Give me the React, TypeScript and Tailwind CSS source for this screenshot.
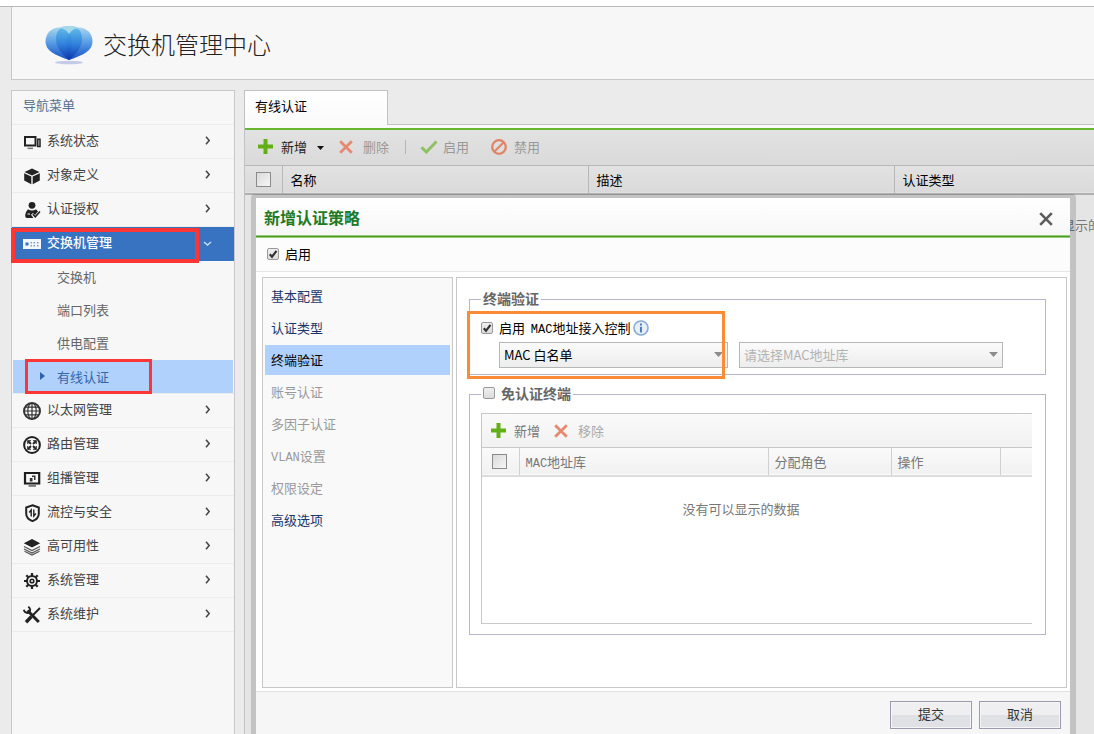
import { useState } from "react";
import type { ReactNode } from "react";

const menuItems = [
  { id: "status", label: "系统状态" },
  { id: "object", label: "对象定义" },
  { id: "auth", label: "认证授权" },
  { id: "switch", label: "交换机管理", children: ["交换机", "端口列表", "供电配置", "有线认证"] },
  { id: "ethernet", label: "以太网管理" },
  { id: "route", label: "路由管理" },
  { id: "multicast", label: "组播管理" },
  { id: "security", label: "流控与安全" },
  { id: "ha", label: "高可用性" },
  { id: "system", label: "系统管理" },
  { id: "maintain", label: "系统维护" },
];

const steps = [
  { label: "基本配置" },
  { label: "认证类型" },
  { label: "终端验证" },
  { label: "账号认证", disabled: true },
  { label: "多因子认证", disabled: true },
  { label: "设置", prefix: "VLAN", disabled: true },
  { label: "权限设定", disabled: true },
  { label: "高级选项" },
];

// 18x18 drawings for the navigation rows
const menuIcons: Record<string, ReactNode> = {
  status: (
    <g>
      <path d="M2 4h10.500v8.500H2z" fill="none" stroke="#222" strokeWidth="2" />
      <path d="M4.500 14.600h5.500v1.500H4.500z" fill="#777" />
      <path d="M14.800 6.300h2.200v7.200h-2.200z" fill="none" stroke="#222" strokeWidth="1.500" />
    </g>
  ),
  object: (
    <g fill="#222">
      <path d="M9 1.500 16.500 5 9 8.500 1.500 5z" />
      <path d="M1.200 6.200 8.300 9.600v7.600L1.200 13.600z" />
      <path d="M16.800 6.200 9.700 9.600v7.600l7.100-3.600z" />
    </g>
  ),
  auth: (
    <g fill="#222">
      <circle cx="9" cy="4.300" r="3.400" />
      <path d="M5 8.200c2.500 1.600 5.500 1.600 8 0l2 2.300-3 3.500-2-2-2 1.700 2.500 3.300H4c-2.500 0-2.500-5 1-8.800z" />
      <path d="m9.800 13.300 2.500 2.500 4.700-5.200" fill="none" stroke="#222" strokeWidth="1.500" />
      <path d="M4.500 13h2.500" stroke="#f7f7f7" />
    </g>
  ),
  switch: (
    <g>
      <path d="M0 4h18v10H0z" fill="#f4f6fa" />
      <path d="M2.500 7.500h3v3h-3z" fill="#3773c0" />
      <path d="M7.500 7h1.500v1.500H7.500zM10.500 7H12v1.500h-1.500zM14 7h1.500v1.500H14zM7.500 10H9v1.500H7.500zM10.500 10H12v1.500h-1.500zM14 10h1.500v1.500H14z" fill="#7b9fd0" />
    </g>
  ),
  ethernet: (
    <g fill="none" stroke="#333" strokeWidth="1.200">
      <circle cx="9" cy="9" r="8" strokeWidth="2" />
      <ellipse cx="9" cy="9" rx="4.200" ry="8" />
      <path d="M9 1v16M1 9h16M2.200 5.200h13.600M2.200 12.800h13.600" />
    </g>
  ),
  route: (
    <g fill="none" stroke="#222">
      <circle cx="9" cy="9" r="7.900" strokeWidth="2" />
      <path d="M5 5l3 3M13 5l-3 3M5 13l3-3M13 13l-3-3" strokeWidth="1.800" />
      <path d="M4.800 8V4.800H8M13.200 8V4.800H10M4.800 10v3.200H8M13.200 10v3.200H10" strokeWidth="1.100" />
    </g>
  ),
  multicast: (
    <g>
      <path d="M2 3h14.200v10.500H2z" fill="none" stroke="#1d1d1d" strokeWidth="2.200" />
      <path d="M5.500 15h7.500v1.800H5.500z" fill="#777" />
      <path d="M6.800 8h2.700v3.500H6.800zM9 5.500h3.500V10H11V7H9z" fill="#333" />
    </g>
  ),
  security: (
    <g fill="none" stroke="#222">
      <path d="M9.500 1.200 15.800 3.500v6.200c0 3.500-2.800 6-6.300 7.400-3.500-1.400-6.300-3.900-6.300-7.400V3.500z" strokeWidth="2" />
      <path d="M8.200 12.500V6L6.200 8.500M10.800 5.500V12l2-2.500" strokeWidth="1.400" />
    </g>
  ),
  ha: (
    <g>
      <path d="M9 1 17.200 5.300 9 9.600.800 5.300z" fill="#222" />
      <path d="M1 8.500 9 12.500l8-4M1 11l8 4 8-4M1.500 13.300 9 17l7.500-3.700" fill="none" stroke="#555" strokeWidth="1.200" />
    </g>
  ),
  system: (
    <g fill="none" stroke="#222">
      <circle cx="9" cy="9" r="5" strokeWidth="2" />
      <circle cx="9" cy="9" r="1.800" strokeWidth="1.600" />
      <path d="M9 1v3M9 14v3M1 9h3M14 9h3M3.300 3.300l2 2M12.700 12.700l2 2M3.300 14.700l2-2M12.700 5.300l2-2" strokeWidth="2.200" />
    </g>
  ),
  maintain: (
    <g fill="none" stroke="#222">
      <path d="M4.500 4.500 15.800 16" strokeWidth="3" />
      <path d="M.800 3.800c.700 3 3.700 4 5.700 2.200 1.200-1.800.700-4-1.300-5.200" strokeWidth="1.900" />
      <path d="M17 2 9.500 9.500" strokeWidth="2" />
      <path d="M8.500 10.500 3 16.200" strokeWidth="3.400" />
    </g>
  ),
};

function Logo() {
  return (
    <svg width="48" height="40" viewBox="0 0 48 40" className="mt-0.5" aria-hidden="true">
      <defs>
        <linearGradient id="petal" x1="0" y1="0" x2="0" y2="1">
          <stop offset="0" stopColor="#a9d6ee" />
          <stop offset="0.450" stopColor="#5a9fe6" />
          <stop offset="1" stopColor="#1650c4" />
        </linearGradient>
        <linearGradient id="core" x1="0" y1="0" x2="0" y2="1">
          <stop offset="0" stopColor="#4fb4e4" />
          <stop offset="0.500" stopColor="#2a7ddb" />
          <stop offset="1" stopColor="#0b2fa6" />
        </linearGradient>
      </defs>
      <ellipse cx="24" cy="37.500" rx="14" ry="1.800" fill="#c3cbe6" />
      <path d="M24 1c7 0 12 2 13 6L24 35 11 7c1-4 6-6 13-6z" fill="#9fd3e8" />
      <path d="M24 35C10 30 .500 26 .500 16.500.500 8 7 2.500 14 2.500c6 0 10 5 10 12z" fill="url(#petal)" />
      <path d="M24 35c14-5 23.500-9 23.500-18.500C47.500 8 41 2.500 34 2.500c-6 0-10 5-10 12z" fill="url(#petal)" />
      <path d="M24 35C16 28 11 22 11 14 11 7 14 3 18 3c6 2 9 8 9 16 0 6-1 11-3 16z" fill="url(#core)" opacity="0.800" />
      <path d="M24 35c8-7 13-13 13-21 0-7-3-11-7-11-6 2-9 8-9 16 0 6 1 11 3 16z" fill="url(#core)" opacity="0.800" />
      <path d="M15 3c2-1.500 5-2 9-2s7 .500 9 2c-4 .500-7 2.500-9 6-2-3.500-5-5.500-9-6z" fill="#a5d8ea" />
    </svg>
  );
}

function PlusIcon() {
  return (
    <svg width="15" height="15" viewBox="0 0 15 15" aria-hidden="true">
      <path d="M5.500 0h4v5.500H15v4H9.500V15h-4V9.500H0v-4h5.500z" fill="#62b016" />
    </svg>
  );
}

function CrossIcon() {
  return (
    <svg width="14" height="14" viewBox="0 0 14 14" aria-hidden="true">
      <path d="m1.200 1.200 11.600 11.600M12.800 1.200 1.200 12.800" stroke="#e58a70" strokeWidth="2.800" />
    </svg>
  );
}

function Tick({ checked = false }: { checked?: boolean }) {
  const [on, setOn] = useState(checked);
  return (
    <span className="grid h-3 w-3 shrink-0">
      <input
        type="checkbox"
        checked={on}
        onChange={() => setOn(!on)}
        className="col-start-1 row-start-1 h-3 w-3 appearance-none rounded-[2px] border border-[#999] bg-linear-to-b from-[#efefef] to-[#dcdcdc]"
      />
      {on && (
        <svg viewBox="0 0 12 12" className="pointer-events-none col-start-1 row-start-1 h-3 w-3">
          <path d="m2.800 6.200 2.200 2.600 4.500-6" fill="none" stroke="#333" strokeWidth="2.200" />
        </svg>
      )}
    </span>
  );
}

function SelectAll() {
  return (
    <input
      type="checkbox"
      aria-label="全选"
      className="block h-[15px] w-[15px] appearance-none border border-[#8b8b8b] bg-linear-to-br from-[#dadada] to-[#f6f6f6]"
    />
  );
}

function Combo({ label, value, className }: { label: string; value: string; className: string }) {
  return (
    <span className={`grid items-center ${className}`}>
      <select
        aria-label={label}
        className="col-start-1 row-start-1 h-[26px] w-full appearance-none border border-[#b5b8b8] bg-linear-to-b from-[#fbfbfb] to-[#ededed] pl-1 text-[13px]"
      >
        <option>{value}</option>
      </select>
      <svg width="9" height="5" viewBox="0 0 9 5" className="pointer-events-none col-start-1 row-start-1 mr-[5px] mb-0.5 justify-self-end">
        <path d="M0 0h9L4.500 5z" fill="#8c8c8c" />
      </svg>
    </span>
  );
}

// Half-width latin letters next to the chinese text
function Narrow({ children }: { children: ReactNode }) {
  return <span className="font-['Liberation_Mono',monospace] text-xs">{children}</span>;
}

function Sidebar() {
  return (
    <nav className="w-56 shrink-0 border border-b-0 border-[#c8c8c8] bg-[#f7f7f7] text-[#444]">
      <h2 className="h-[34px] border-b border-[#ececec] pl-[11px] leading-7 text-[#56708f]">导航菜单</h2>
      <ul>
        {menuItems.map((item) => (
          <li key={item.id}>
            <button
              className={
                item.children
                  ? "relative flex h-[34px] w-full items-center bg-[#3773c0] pr-5 pl-[11px] text-white"
                  : "relative flex h-[34px] w-full items-center border-b border-[#ececec] pr-5 pl-[11px]"
              }
            >
              <svg width="18" height="18" viewBox="0 0 18 18" aria-hidden="true">
                {menuIcons[item.id]}
              </svg>
              <span className={item.children ? "ml-1.5 pb-1 font-medium" : "ml-1.5 pb-1"}>{item.label}</span>
              <svg width="9" height="9" viewBox="0 0 9 9" className="mr-0.5 mb-0.5 ml-auto" aria-hidden="true">
                <path
                  d={item.children ? "m1 3 3.500 3L8 3" : "m3 .800 3.200 3.700L3 8.200"}
                  fill="none"
                  stroke={item.children ? "#c8dcf5" : "#444"}
                  strokeWidth="1.500"
                />
              </svg>
              {item.children && (
                <span className="absolute top-px -left-px z-10 h-[35px] w-[188px] border-4 border-[#fc3535]" />
              )}
            </button>
            {item.children && (
              <ul className="border-b border-[#ececec] px-px text-[#666]">
                {item.children.map((child, i) => (
                  <li key={child} className="relative">
                    <a
                      href="#"
                      className={
                        i === 3
                          ? "flex h-[33px] items-center bg-[#b0d1fb] pl-[27px] text-[#3565a8]"
                          : "flex h-[33px] items-center pb-0.5 pl-11"
                      }
                    >
                      {i === 3 && (
                        <svg width="5" height="8" viewBox="0 0 5 8" className="mr-3 mb-px" aria-hidden="true">
                          <path d="M0 0v8l5-4z" fill="#2f62ad" />
                        </svg>
                      )}
                      {child}
                    </a>
                    {i === 3 && (
                      <span className="pointer-events-none absolute -top-px left-3 h-[35px] w-[127px] border-3 border-[#fc3535]" />
                    )}
                  </li>
                ))}
              </ul>
            )}
          </li>
        ))}
      </ul>
    </nav>
  );
}

function PolicyDialog() {
  const [active, setActive] = useState(2);

  return (
    <div
      role="dialog"
      aria-labelledby="dialog-title"
      className="absolute top-[104px] right-[18px] bottom-0 left-1.5 flex flex-col rounded-t-sm border-t-4 border-r-6 border-l-5 border-black/15 bg-white bg-clip-padding"
    >
      <div className="flex h-[37px] shrink-0 items-center justify-between bg-linear-to-b from-white to-[#f7f7f7] pr-[17px] pl-2">
        <h2 id="dialog-title" className="text-base font-bold text-[#1f7a24]">新增认证策略</h2>
        <button aria-label="关闭" className="mt-1">
          <svg width="14" height="14" viewBox="0 0 14 14">
            <path d="m1.200 1.200 11.600 11.600M12.800 1.200 1.200 12.800" stroke="#5c5c5c" strokeWidth="2.600" />
          </svg>
        </button>
      </div>
      <div className="h-[3px] shrink-0 border-y border-[#94c977] bg-[#4f9c22]" />
      <div className="flex h-[34px] shrink-0 items-center border-b border-[#e6e6e6] bg-[#fcfcfc] pb-0.5 pl-[11px]">
        <label className="flex items-center gap-1.5">
          <Tick checked />
          启用
        </label>
      </div>

      <div className="flex min-h-0 flex-1 gap-[3px] pt-[5px] pr-[3px] pb-[3px] pl-1.5">
        <ul className="flex w-[191px] shrink-0 flex-col gap-0.5 border border-[#c8c8c8] bg-[#f9f9f9] px-0.5 pt-[3px]">
          {steps.map((step, i) => (
            <li key={step.label}>
              <button
                disabled={step.disabled}
                onClick={() => setActive(i)}
                className={`h-[30px] w-full pl-1.5 text-left ${
                  step.disabled ? "text-[#999]" : active === i ? "bg-[#b0d1fb] text-black" : "text-[#1b3668]"
                }`}
              >
                {step.prefix && <Narrow>{step.prefix}</Narrow>}
                {step.label}
              </button>
            </li>
          ))}
        </ul>

        <div className="min-w-0 flex-1 border border-[#c8c8c8] pt-3 pr-5 pl-3">
          <fieldset className="border border-[#b5b5cb] px-[11px] pb-1.5">
            <legend className="h-[18px] px-0.5 text-sm leading-[18px] font-bold text-[#666]">
              <span className="block leading-4">终端验证</span>
            </legend>
            <div className="relative pt-2.5">
              <div className="flex h-5 items-center">
                <label className="flex items-center gap-1.5">
                  <Tick checked />
                  <span>
                    启用&nbsp; <Narrow>MAC</Narrow>地址接入控制
                  </span>
                </label>
                <svg width="16" height="16" viewBox="0 0 16 16" className="ml-[3px]" aria-hidden="true">
                  <circle cx="8" cy="8" r="7" fill="#e6effa" stroke="#87a9d3" strokeWidth="1.600" />
                  <path d="M7 3.500h2v2H7zM7 6.800h2v5.700H7z" fill="#4c7fc0" />
                </svg>
              </div>
              <div className="mt-1 ml-[18px] flex gap-[11px]">
                <Combo label="接入控制方式" value="MAC 白名单" className="w-[229px]" />
                <Combo label="MAC地址库" value="请选择MAC地址库" className="w-[264px] text-[#b3b3b3]" />
              </div>
              <span className="pointer-events-none absolute top-[3px] -left-3.5 h-[68px] w-[258px] border-3 border-[#fb8b34]" />
            </div>
          </fieldset>

          <fieldset className="mt-2.5 border border-[#b5b5cb] pr-[13px] pb-2.5 pl-[11px]">
            <legend className="h-[18px] px-0.5 text-sm leading-[18px] font-bold text-[#666]">
              <label className="flex items-center gap-1.5 leading-4">
                <Tick />
                免认证终端
              </label>
            </legend>
            <div className="mt-2.5 border border-r-0 border-[#c8c8c8]">
              <div className="flex h-[34px] items-center border-b border-[#c8c8c8] bg-linear-to-b from-[#fafafa] to-[#f1f1f1] pl-[9px]">
                <button className="flex items-center gap-2 text-[#777]">
                  <PlusIcon />
                  新增
                </button>
                <button className="ml-3.5 flex items-center gap-2.5 text-[#aaa]">
                  <CrossIcon />
                  移除
                </button>
              </div>
              <table className="w-full table-fixed text-left text-[#777]">
                <thead>
                  <tr className="h-7 border-b-2 border-[#dcdcdc] bg-linear-to-b from-[#fafafa] to-[#f1f1f1]">
                    <th className="w-[37px] border-r border-[#d0d0d0] pl-2.5"><SelectAll /></th>
                    <th className="w-[249px] border-r border-[#d0d0d0] pl-1.5 font-normal"><Narrow>MAC</Narrow>地址库</th>
                    <th className="w-[123px] border-r border-[#d0d0d0] pl-1.5 font-normal">分配角色</th>
                    <th className="w-[109px] border-r border-[#d0d0d0] pl-1.5 font-normal">操作</th>
                    <th></th>
                  </tr>
                </thead>
                <tbody>
                  <tr className="h-[147px]">
                    <td colSpan={5} className="pt-[22px] pr-8 text-center align-top">没有可以显示的数据</td>
                  </tr>
                </tbody>
              </table>
            </div>
          </fieldset>
        </div>
      </div>

      <div className="flex shrink-0 justify-end gap-[7px] border-t border-[#e2e2e2] bg-[#f6f6f6] pt-[9px] pr-[9px] pb-[5px]">
        {["提交", "取消"].map((text) => (
          <button
            key={text}
            className="h-7 w-[82px] border border-[#9b9bac] bg-linear-to-b from-[#efeff1] from-50% to-[#dfe1e4] to-50% pb-0.5 text-[#333] inset-ring inset-ring-[#f6f6f8]"
          >
            {text}
          </button>
        ))}
      </div>
    </div>
  );
}

export default function App() {
  return (
    <div className="flex h-screen flex-col overflow-hidden bg-[#ebebeb] font-['Noto_Sans_CJK_SC',sans-serif] text-[13px] leading-5">
      <div className="h-[7px] shrink-0 border-b border-[#b8b8b8] bg-white" />
      <header className="ml-[11px] flex h-[73px] shrink-0 items-center gap-2.5 border-b border-l border-[#c8c8c8] bg-[#f7f7f7] pt-0.5 pl-[33px]">
        <Logo />
        <h1 className="text-2xl font-light text-[#222]">交换机管理中心</h1>
      </header>

      <div className="mt-2.5 ml-[11px] flex min-h-0 flex-1 gap-[9px]">
        <Sidebar />

        <main className="relative min-w-0 flex-1 overflow-hidden border-l border-[#c2c2c2] bg-[#e5e5e5]">
          <div className="flex h-[35px] bg-[#ebebeb]">
            <button className="w-[143px] border-t border-r border-[#c2c2c2] bg-linear-to-b from-white to-[#fafafa] pb-1 pl-2.5 text-left">
              有线认证
            </button>
            <div className="flex-1 border-b border-[#c2c2c2]" />
          </div>
          <div className="h-[5px] border-b-2 border-[#67b82f] bg-[#fafafa]" />
          <div className="flex h-9 items-center border-b border-[#b8b8b8] bg-linear-to-b from-[#e2e2e2] to-[#dadada] pb-0.5 pl-[13px] text-[#999]">
            <button className="flex items-center gap-2 text-[#222]">
              <PlusIcon />
              新增
              <svg width="7" height="4" viewBox="0 0 7 4" className="mt-0.5 ml-0.5" aria-hidden="true">
                <path d="M0 0h7L3.500 4z" fill="#111" />
              </svg>
            </button>
            <button className="ml-[15px] flex items-center gap-2.5">
              <CrossIcon />
              删除
            </button>
            <span className="mx-4 h-3.5 w-px bg-[#b5b5b5]" />
            <button className="-ml-0.5 flex items-center gap-[5px]">
              <svg width="18" height="14" viewBox="0 0 18 14" aria-hidden="true">
                <path d="m1.500 7.200 4.800 4.800L16.500 1.500" fill="none" stroke="#8fc065" strokeWidth="3" />
              </svg>
              启用
            </button>
            <button className="ml-[22px] flex items-center gap-[7px]">
              <svg width="16" height="16" viewBox="0 0 16 16" aria-hidden="true">
                <path d="M3 13 13 3" stroke="#e08465" strokeWidth="2.200" />
                <circle cx="8" cy="8" r="6.800" fill="none" stroke="#e08465" strokeWidth="2.300" />
              </svg>
              禁用
            </button>
          </div>
          <table className="w-full min-w-[1647px] table-fixed text-left">
            <thead>
              <tr className="h-7 border-b-2 border-[#b0b0b0] bg-linear-to-b from-[#e2e2e2] to-[#dadada]">
                <th className="w-[37px] border-r border-[#b8b8b8] pl-[11px]"><SelectAll /></th>
                <th className="w-[306px] border-r border-[#b8b8b8] pl-2 font-normal">名称</th>
                <th className="w-[306px] border-r border-[#b8b8b8] pl-2 font-normal">描述</th>
                <th className="pl-2 font-normal">认证类型</th>
              </tr>
            </thead>
            <tbody>
              <tr>
                <td colSpan={4} className="pt-5 text-center text-[#777]">没有可以显示的数据</td>
              </tr>
            </tbody>
          </table>
          <PolicyDialog />
        </main>
      </div>
    </div>
  );
}
